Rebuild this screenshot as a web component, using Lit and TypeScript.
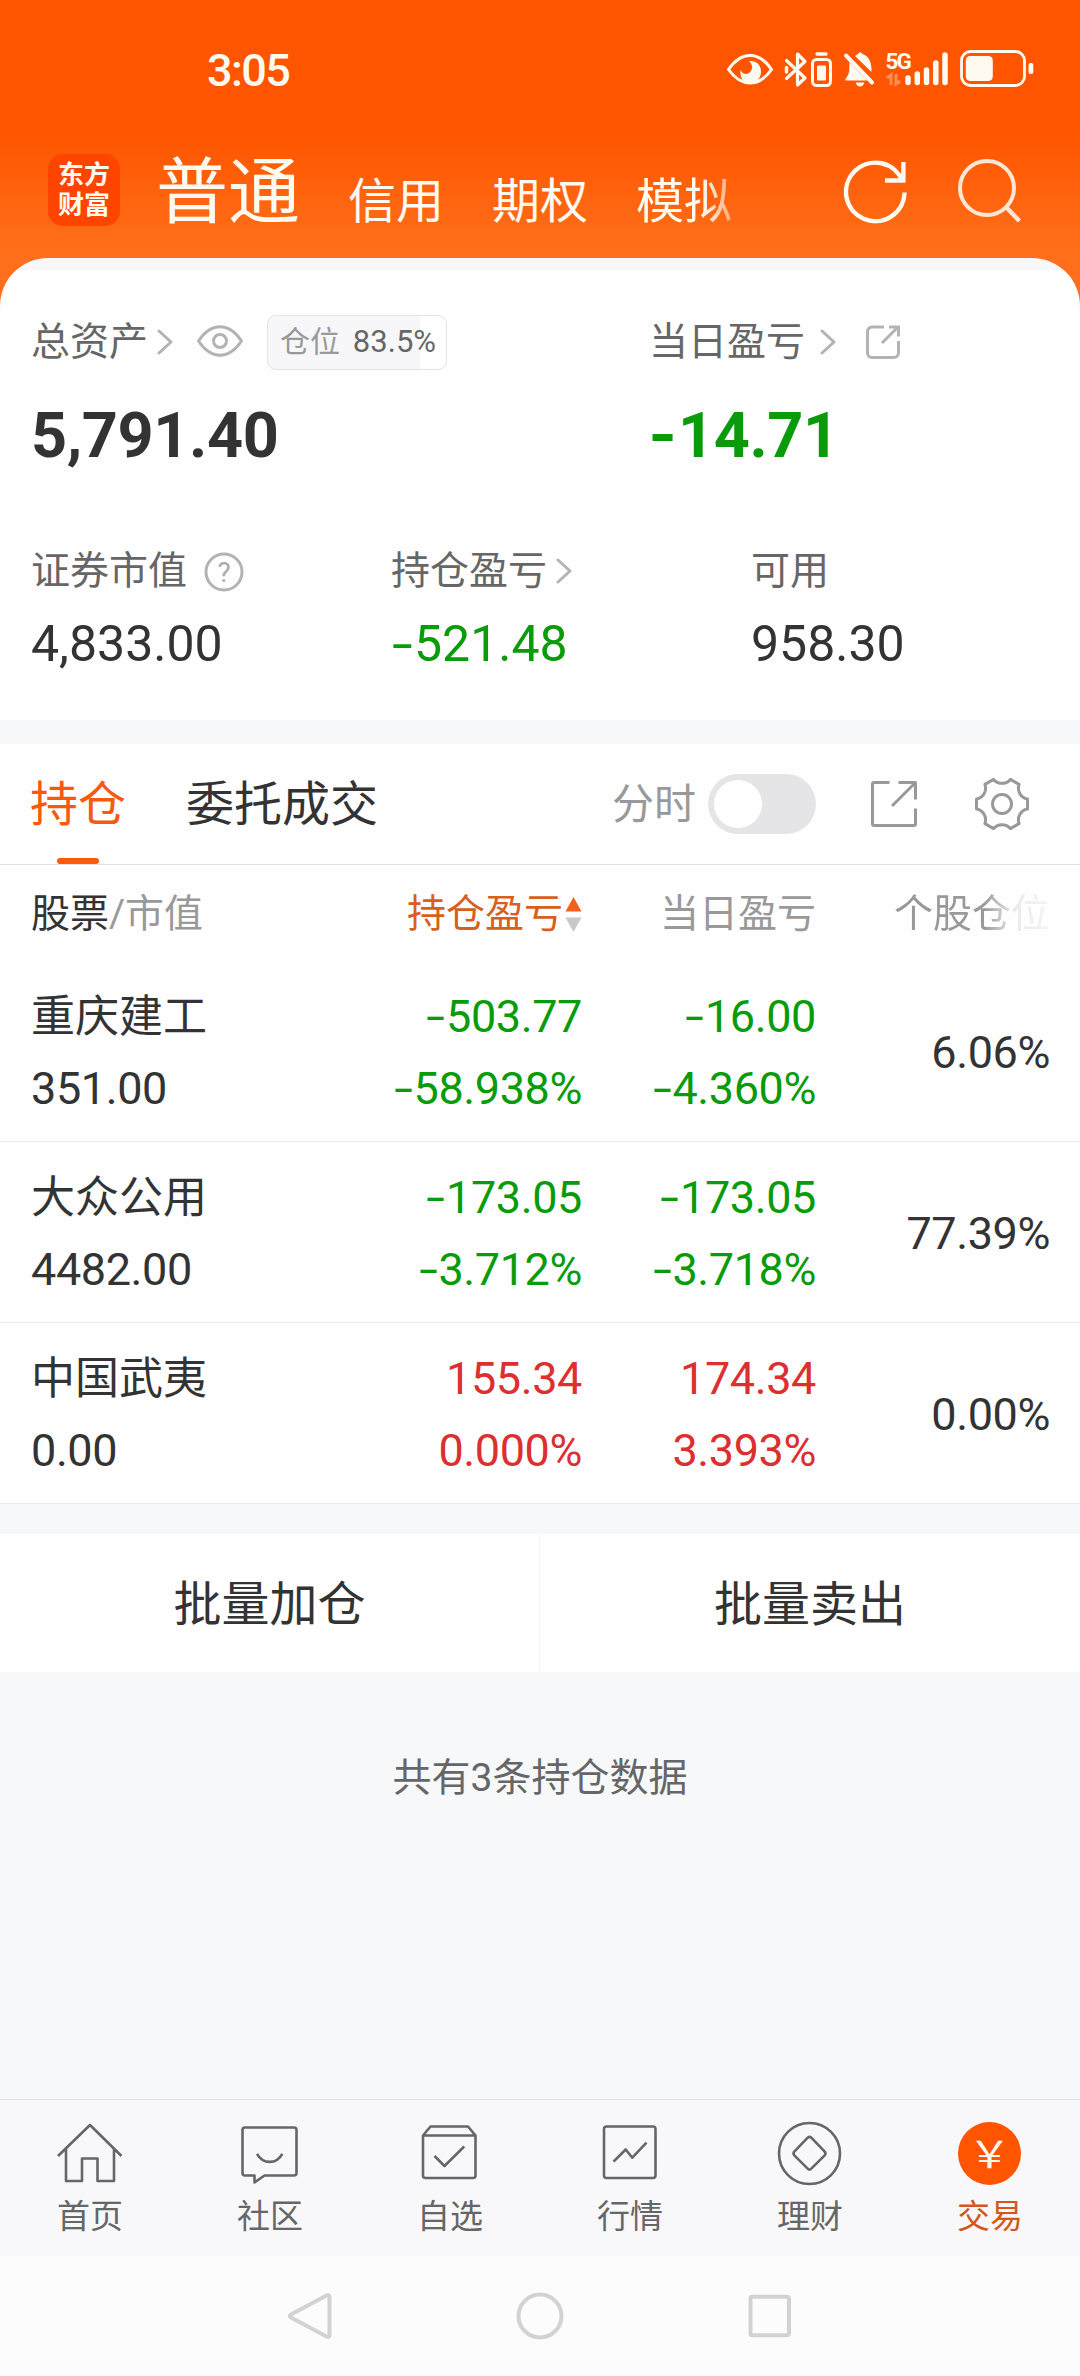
import { LitElement, html, svg, css } from "lit";
import { customElement } from "lit/decorators.js";

const num = (value: string) =>
  value.startsWith("-")
    ? html`<span class="neg">-</span>${value.slice(1)}`
    : html`${value}`;

const tone = (value: string, other: string) =>
  value.startsWith("-") || other.startsWith("-") ? "down" : "up";

interface Holding {
  name: string;
  worth: string;
  profit: [string, string];
  today: [string, string];
  share: string;
}

const HOLDINGS: Holding[] = [
  { name: "重庆建工", worth: "351.00", profit: ["-503.77", "-58.938%"], today: ["-16.00", "-4.360%"], share: "6.06%" },
  { name: "大众公用", worth: "4482.00", profit: ["-173.05", "-3.712%"], today: ["-173.05", "-3.718%"], share: "77.39%" },
  { name: "中国武夷", worth: "0.00", profit: ["155.34", "0.000%"], today: ["174.34", "3.393%"], share: "0.00%" },
];

/* Six-lobed gear: flat teeth joined by concave arcs. */
const gearPath = (() => {
  const rotate = (x: number, y: number, deg: number) => {
    const a = (deg * Math.PI) / 180;
    return `${(x * Math.cos(a) - y * Math.sin(a)).toFixed(2)} ${(x * Math.sin(a) + y * Math.cos(a)).toFixed(2)}`;
  };
  let d = `M${rotate(25.5, -5, 0)}`;
  for (let k = 0; k < 6; k++) {
    d += `L${rotate(25.5, 5, k * 60)}A11 11 0 0 0 ${rotate(25.5, -5, (k + 1) * 60)}`;
  }
  return d + "Z";
})();

const chevron = html`<svg class="chevron" width="16" height="26" viewBox="0 0 16 26">
  <path d="M2 2 14 13 2 24" />
</svg>`;

const NAV = [
  { label: "首页", icon: svg`<path d="M-32 3 0-28 31.500 3M-24-4.500V28H-8V5.500H7.500V28H24V-4.500" />` },
  {
    label: "社区",
    icon: svg`<path d="M-25-25.500H24A2.500 2.500 0 0 1 26.500-23V20A2.500 2.500 0 0 1 24 22.500H-5.500L-15.500 29.500V22.500H-25A2.500 2.500 0 0 1-27.500 20V-23A2.500 2.500 0 0 1-25-25.500Z" /><path d="M-13 .8C-7 11.500 6.500 11.500 12.300.8" />`,
  },
  {
    label: "自选",
    icon: svg`<path d="M-27-17.500-19.500-26.500H18L25.500-17.500V22.500A2.500 2.500 0 0 1 23 25H-24.500A2.500 2.500 0 0 1-27 22.500ZH25.500M-15.500 3-5.500 13 14.200-6.500" />`,
  },
  {
    label: "行情",
    icon: svg`<rect x="-26" y="-26.500" width="51.500" height="51.500" rx="2.500" /><path d="M-16.500 8.700-4.300-3.500 2.300 4.700 16.500-10.300" />`,
  },
  {
    label: "理财",
    icon: svg`<circle cx="-.5" cy=".5" r="30.500" /><path d="M-2.300-15.300Q-.5-17 1.300-15.300L14.700-1.300Q16.300.5 14.700 2.300L1.300 15.700Q-.5 17.500-2.300 15.700L-15.700 2.300Q-17.300.5-15.700-1.300Z" />`,
  },
  {
    label: "交易",
    active: true,
    icon: svg`<circle class="coin" cx="-.5" cy=".5" r="31.500" /><text class="yen" x="0" y="15" transform="translate(-.5 0) scale(1.150 1)">￥</text>`,
  },
];

@customElement("app-root")
export class AppRoot extends LitElement {
  static styles = css`
    :host {
      display: flex;
      flex-direction: column;
      width: 1080px;
      height: 2376px;
      overflow: hidden;
      background: #f7f8fa;
      color: #333;
      font-family: Roboto, "Noto Sans CJK SC", sans-serif;
      font-size: 39px;
      line-height: 54px;
      white-space: nowrap;
    }
    svg {
      display: block;
      flex: none;
      fill: none;
    }
    .neg {
      display: inline-block;
      width: 0.46em;
      text-align: center;
      transform: scaleX(1.5);
    }
    .down { color: #0a9b0a; }
    .up { color: #dc3030; }

    .top {
      height: 306px;
      margin-bottom: -48px;
      flex: none;
      background: linear-gradient(#ff5500 135px, #ff6d18 240px, #ff7020 306px);
      color: #fffaf0;
    }
    .status {
      display: flex;
      align-items: center;
      height: 139px;
      box-sizing: border-box;
      padding: 0 46px 0 207px;
      font-size: 45px;
      font-weight: 500;
    }
    .status .time {
      letter-spacing: -1.6px;
      padding-top: 2px;
      flex: 1;
    }
    .accounts {
      display: flex;
      align-items: center;
      height: 104px;
      padding: 0 0 0 48px;
    }
    .logo {
      display: flex;
      align-items: center;
      justify-content: center;
      width: 72px;
      height: 72px;
      margin-top: -2px;
      border-radius: 15px;
      background: #ff4400;
      font-size: 26px;
      font-weight: 700;
      line-height: 30px;
    }
    .tabs {
      display: flex;
      align-items: baseline;
      gap: 48px;
      width: 687px;
      margin-left: 36px;
      padding-top: 11px;
      font-size: 48px;
      line-height: 100px;
    }
    .tabs span { transform: translateY(1px); }
    .tabs .current {
      font-size: 72px;
      transform: none;
    }
    .tabs .fading {
      -webkit-mask-image: linear-gradient(90deg, #000 70%, rgba(0, 0, 0, 0.45));
      mask-image: linear-gradient(90deg, #000 70%, rgba(0, 0, 0, 0.45));
    }
    .search { margin-left: 47px; }

    .summary {
      height: 462px;
      flex: none;
      box-sizing: border-box;
      padding-top: 57px;
      border-radius: 48px 48px 0 0;
      background: linear-gradient(#f7f7fa 12px, #fefefe 12px);
      color: #666;
    }
    .pair {
      display: grid;
      grid-template-columns: 618px 1fr;
      padding-left: 31px;
    }
    .triple {
      display: grid;
      grid-template-columns: repeat(3, 360px);
      padding-left: 31px;
      margin-top: 78px;
    }
    .label {
      display: flex;
      align-items: center;
      height: 54px;
    }
    .chevron {
      stroke: #b3b3b3;
      stroke-width: 3;
      stroke-linecap: round;
      stroke-linejoin: round;
      margin-left: 9px;
    }
    .wide .chevron { margin-left: 15px; }
    .line-icon {
      stroke: #b3b3b3;
      stroke-width: 3;
    }
    .eye { margin: -2px 24px 0; }
    .share { margin-left: 30px; }
    .help { margin: 2px 0 0 17px; }
    .help text {
      fill: #aaa;
      stroke: none;
      font-size: 28px;
      text-anchor: middle;
    }
    .badge {
      display: flex;
      align-items: center;
      justify-content: space-between;
      width: 180px;
      height: 55px;
      box-sizing: border-box;
      padding: 0 10px 0 12px;
      border: 1px solid #e3e4e8;
      border-radius: 9px;
      background: linear-gradient(90deg, #f7f7fa 152px, #fff 152px);
      font-size: 30px;
      color: #999;
    }
    .badge b {
      color: #666;
      font-weight: 400;
      font-size: 31px;
    }
    .big {
      margin-top: 37px;
      font-size: 63px;
      font-weight: 700;
      line-height: 60px;
      letter-spacing: -0.4px;
    }
    .big .neg { transform: translateX(-1px) scaleX(1.15); }
    .mid {
      margin-top: 19px;
      font-size: 50px;
    }
    .dark { color: #333; }

    .positions {
      flex: none;
      margin-top: 24px;
      background: #fefefe;
    }
    .bar {
      display: flex;
      align-items: center;
      height: 121px;
      box-sizing: border-box;
      padding: 0 50px 0 30px;
      border-bottom: 1px solid #dedee0;
      font-size: 48px;
    }
    .tab {
      display: flex;
      flex-direction: column;
      align-items: center;
      height: 120px;
      margin-right: 60px;
      line-height: 122px;
    }
    .tab.on { color: #f75a0c; }
    .tab.on::after {
      content: "";
      width: 42px;
      height: 6px;
      margin-top: -8px;
      border-radius: 3px;
      background: #ff5a0a;
    }
    .minute {
      margin-left: auto;
      padding-top: 2px;
      font-size: 42px;
      color: #999;
    }
    .toggle {
      width: 108px;
      height: 60px;
      box-sizing: border-box;
      margin: 0 54px 0 12px;
      padding: 6px;
      border-radius: 30px;
      background: #e5e5e8;
    }
    .toggle i {
      display: block;
      width: 48px;
      height: 48px;
      border-radius: 24px;
      background: #fff;
    }
    .tool {
      stroke: #999;
      stroke-width: 3;
      stroke-linejoin: round;
    }
    .gear { margin-left: 56px; }
    .grid {
      display: grid;
      grid-template-columns: 299px 252px 234px 234px;
      align-items: center;
      padding-left: 31px;
      text-align: right;
    }
    .grid > :first-child { text-align: left; }
    .head {
      height: 96px;
      box-sizing: border-box;
      padding-top: 2px;
      color: #999;
    }
    .sorted {
      display: flex;
      align-items: center;
      justify-content: flex-end;
      gap: 2px;
      color: #d85f1c;
    }
    .edge {
      -webkit-mask-image: linear-gradient(90deg, #000 58%, rgba(0, 0, 0, 0.2) 76%, rgba(0, 0, 0, 0.1));
      mask-image: linear-gradient(90deg, #000 58%, rgba(0, 0, 0, 0.2) 76%, rgba(0, 0, 0, 0.1));
      justify-self: end;
    }
    .row {
      height: 181px;
      box-sizing: border-box;
      padding-top: 4px;
      border-bottom: 1px solid #ebebed;
      font-size: 45px;
      line-height: 72px;
      letter-spacing: -0.4px;
    }
    .row .name {
      font-size: 44px;
      letter-spacing: 0;
    }

    .actions {
      display: grid;
      grid-template-columns: 1fr 1fr;
      height: 138px;
      flex: none;
      margin-top: 30px;
      background: #fff;
      font-size: 48px;
      line-height: 141px;
      text-align: center;
    }
    .actions > span { height: 138px; }
    .actions > :first-child { border-right: 1px solid #f5f5f7; }
    .count {
      margin-top: 79px;
      text-align: center;
      color: #666;
    }

    .nav {
      display: grid;
      grid-template-columns: repeat(6, 1fr);
      height: 157px;
      flex: none;
      box-sizing: border-box;
      margin-top: auto;
      border-top: 1px solid #dfe0e3;
      background: #f8f8fb;
      font-size: 33px;
      line-height: 48px;
      color: #666;
    }
    .item {
      display: flex;
      flex-direction: column;
      align-items: center;
      gap: 4px;
      padding-top: 17px;
    }
    .item svg {
      stroke: #666;
      stroke-width: 2.6;
      stroke-linejoin: round;
    }
    .item .coin {
      fill: #ff5500;
      stroke: none;
    }
    .item .yen {
      fill: #fffaf0;
      stroke: none;
      font-family: "Noto Sans CJK SC", sans-serif;
      font-size: 37px;
      text-anchor: middle;
    }
    .item.active { color: #d4571a; }

    .system {
      display: flex;
      align-items: center;
      justify-content: center;
      gap: 182px;
      height: 120px;
      flex: none;
      background: #fcfcfc;
    }
    .system svg {
      stroke: #d2d2d2;
      stroke-width: 4;
      stroke-linejoin: round;
    }
  `;

  private renderStatus() {
    return html`<div class="status">
      <span class="time">3:05</span>
      <svg width="308" height="60" viewBox="726 40 308 60" fill="none" stroke="#fffaf0" stroke-width="3">
        <path d="M728.500 69.500Q738 55.500 750 55.500T771.500 69.500Q762 83 750 83T728.500 69.500Z" />
        <path fill="#fffaf0" stroke="none" d="M749 61C757 60 761.500 66 761 72.500C760.500 78 757 83 750 83C743 83 739.500 77 740.500 70C742.500 74.500 748 75.500 751 71C753 67.500 752 63.500 749 61Z" />
        <path stroke-width="3.200" stroke-linejoin="round" stroke-linecap="round" d="M786.500 60.500 805 78 797.500 85V54L805 61.500 786.500 78.500" />
        <path d="M786.500 67.500V72" stroke-width="3.500" stroke-linecap="round" />
        <rect x="812.500" y="59.500" width="18" height="26" rx="4" />
        <path d="M817 54H826" stroke-width="3.500" stroke-linecap="round" />
        <rect x="817" y="65.500" width="9" height="15" rx="1" fill="#fffaf0" stroke="none" />
        <g fill="#fffaf0" stroke="none">
          <path d="M855 56Q857 54.500 858 54Q860 50.500 862.500 54Q872 57 871.500 72Z" />
          <path d="M849.500 62 867 80.500H845.500V78.500Q849.500 75 849.300 68Z" />
          <path d="M855.500 82.500H864.500Q863 86.500 860 86.500T855.500 82.500Z" />
        </g>
        <path d="M846 55.500 872 82.500" stroke-width="4" stroke-linecap="round" />
        <g stroke-width="5.500" stroke-linecap="round">
          <path d="M908 78V82.500M917.300 74V82.500M926.500 70V82.500M935.800 63V82.500M945 55V82.500" />
        </g>
        <text x="885.500" y="68.500" font-size="22.500" font-weight="700" fill="#fffaf0" stroke="none" letter-spacing="-2">5G</text>
        <path opacity=".35" d="M887 78 891 75V85M896 74V84L900 81" />
        <rect x="961.500" y="51.500" width="63" height="34" rx="9" stroke-width="2.800" />
        <rect x="965.800" y="56" width="27" height="25" rx="4.500" fill="#fffaf0" stroke="none" />
        <rect x="1028.500" y="63" width="4.800" height="11" rx="2" fill="#fffaf0" stroke="none" />
      </svg>
    </div>`;
  }

  private renderSummary() {
    return html`<section class="summary">
      <div class="pair">
        <div>
          <div class="label">
            总资产${chevron}
            <svg class="line-icon eye" width="46" height="32" viewBox="0 0 46 32">
              <path d="M1.500 16Q11 1.700 23 1.700T44.500 16Q35 30.300 23 30.300T1.500 16Z" />
              <circle cx="23" cy="16" r="6.500" />
            </svg>
            <span class="badge">仓位<b>83.5%</b></span>
          </div>
          <div class="big dark">5,791.40</div>
        </div>
        <div>
          <div class="label wide">
            当日盈亏${chevron}
            <svg class="line-icon share" width="34" height="34" viewBox="0 0 34 34">
              <path d="M18 2H6A4.500 4.500 0 0 0 1.500 6.500V28A4.500 4.500 0 0 0 6 32.500H28A4.500 4.500 0 0 0 32.500 28V16M23 2H32.500V11.500M32 2 16 18" />
            </svg>
          </div>
          <div class="big down">${num("-14.71")}</div>
        </div>
      </div>
      <div class="triple">
        <div>
          <div class="label">
            证券市值
            <svg class="line-icon help" width="40" height="40" viewBox="0 0 40 40">
              <circle cx="20" cy="20" r="18" />
              <text x="20" y="30">?</text>
            </svg>
          </div>
          <div class="mid dark">4,833.00</div>
        </div>
        <div>
          <div class="label">持仓盈亏${chevron}</div>
          <div class="mid down">${num("-521.48")}</div>
        </div>
        <div>
          <div class="label">可用</div>
          <div class="mid dark">958.30</div>
        </div>
      </div>
    </section>`;
  }

  private renderPositions() {
    return html`<section class="positions">
      <div class="bar">
        <span class="tab on">持仓</span>
        <span class="tab">委托成交</span>
        <span class="minute">分时</span>
        <span class="toggle"><i></i></span>
        <svg class="tool" width="48" height="48" viewBox="0 0 48 48">
          <path d="M19.500 2.500H4A1.500 1.500 0 0 0 2.500 4V44A1.500 1.500 0 0 0 4 45.500H44A1.500 1.500 0 0 0 45.500 44V28.500M28.500 2.500H45.500V19.500M45 3 22 26" />
        </svg>
        <svg class="tool gear" width="56" height="56" viewBox="-28 -28 56 56">
          <path d=${gearPath} />
          <circle r="9.500" />
        </svg>
      </div>
      <div class="grid head">
        <span><span class="dark">股票</span>/市值</span>
        <span class="sorted">
          持仓盈亏
          <svg width="17" height="36" viewBox="0 0 17 36">
            <path fill="#f2611a" d="M8.500 1 16.500 15.500H.5Z" />
            <path fill="#c8c8c8" d="M8.500 36 16.500 21.500H.5Z" />
          </svg>
        </span>
        <span>当日盈亏</span>
        <span class="edge">个股仓位</span>
      </div>
      ${HOLDINGS.map(
        (h) => html`<div class="grid row">
          <div class="dark">
            <div class="name">${h.name}</div>
            <div>${h.worth}</div>
          </div>
          <div class=${tone(h.profit[0], h.profit[1])}>
            ${h.profit.map((v) => html`<div>${num(v)}</div>`)}
          </div>
          <div class=${tone(h.today[0], h.today[1])}>
            ${h.today.map((v) => html`<div>${num(v)}</div>`)}
          </div>
          <div class="dark">${h.share}</div>
        </div>`
      )}
    </section>`;
  }

  render() {
    return html`
      <header class="top">
        ${this.renderStatus()}
        <div class="accounts">
          <div class="logo">东方<br />财富</div>
          <nav class="tabs">
            <span class="current">普通</span>
            <span>信用</span>
            <span>期权</span>
            <span class="fading">模拟</span>
          </nav>
          <svg width="66" height="66" viewBox="843 158 66 66" stroke="#fffaf0" stroke-width="4.400">
            <path d="M904.600 192.500A29.300 29.300 0 1 1 902.500 181M903.400 162V180.500H885" />
          </svg>
          <svg class="search" width="66" height="66" viewBox="956 157 66 66" stroke="#ffe6d4" stroke-width="4">
            <circle cx="987" cy="187" r="27" />
            <path d="M1006 206 1019.500 220" stroke-width="4.500" />
          </svg>
        </div>
      </header>
      ${this.renderSummary()} ${this.renderPositions()}
      <div class="actions"><span>批量加仓</span><span>批量卖出</span></div>
      <div class="count">共有3条持仓数据</div>
      <nav class="nav">
        ${NAV.map(
          (n) => html`<div class="item ${n.active ? "active" : ""}">
            <svg width="72" height="72" viewBox="-36 -36 72 72">${n.icon}</svg>
            <span>${n.label}</span>
          </div>`
        )}
      </nav>
      <div class="system">
        <svg width="48" height="48" viewBox="0 0 48 48"><path d="M43.500 5.500Q43.500 2 40.500 3.500L5 22.500Q2.500 24 5 25.500L40.500 44.500Q43.500 46 43.500 42.500Z" /></svg>
        <svg width="48" height="48" viewBox="0 0 48 48"><circle cx="24" cy="24" r="21.500" /></svg>
        <svg width="48" height="48" viewBox="0 0 48 48"><rect x="4.500" y="4.800" width="38.500" height="38.500" rx="2" /></svg>
      </div>
    `;
  }
}
